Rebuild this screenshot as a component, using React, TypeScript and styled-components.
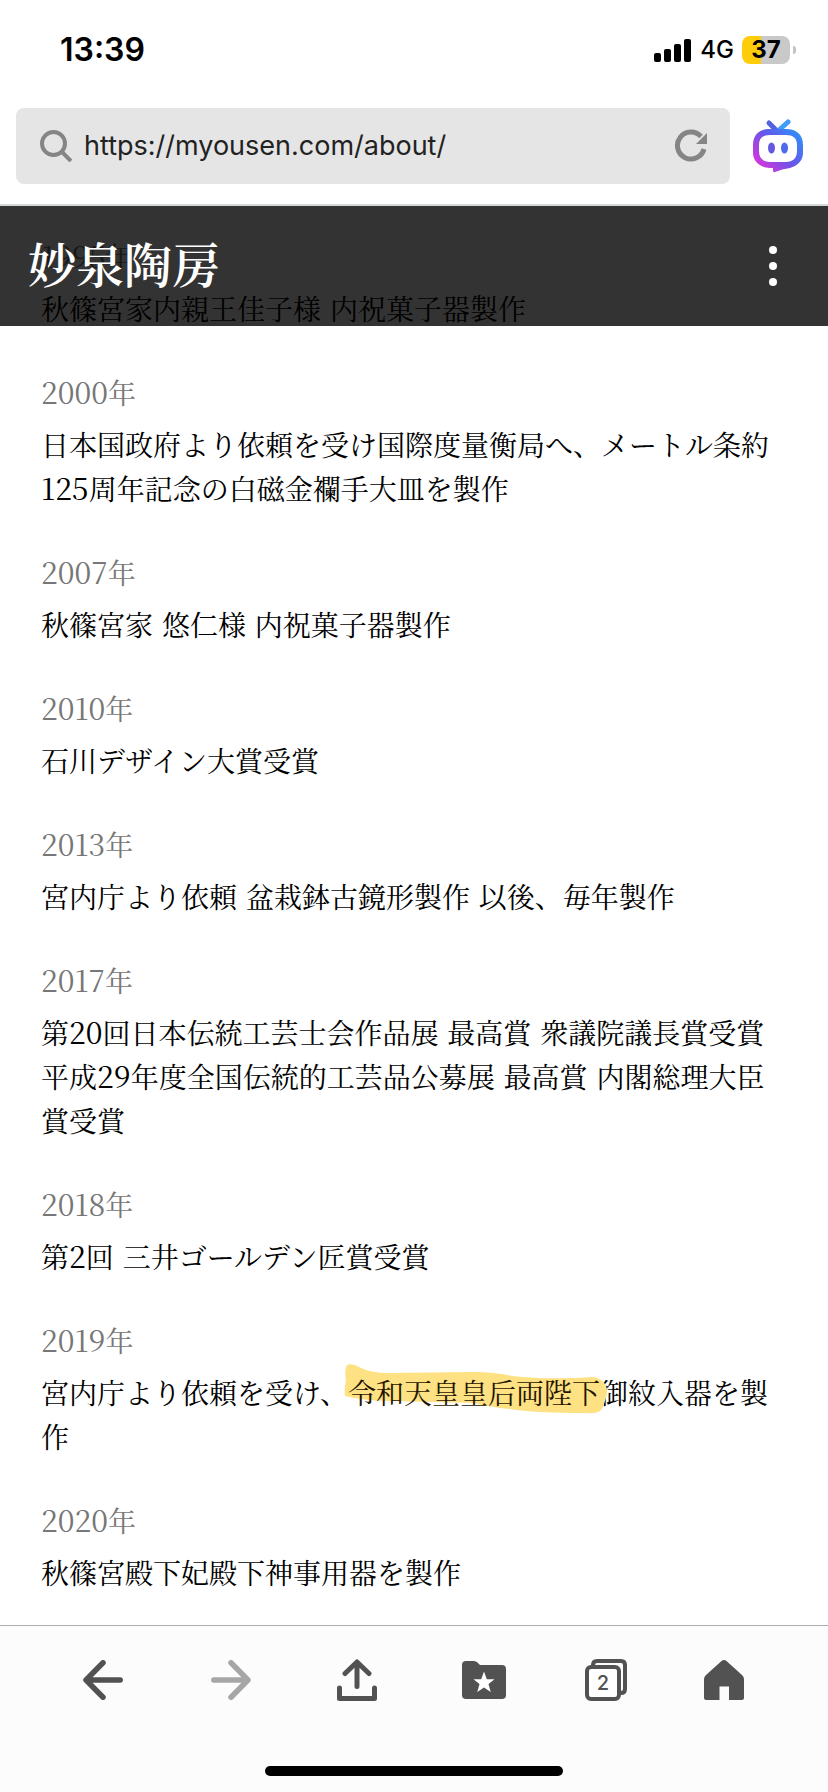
import React, { Fragment } from "react";
import styled, { createGlobalStyle } from "styled-components";

const GlobalStyle = createGlobalStyle`
  *, *::before, *::after { box-sizing: border-box; }
  body { margin: 0; background: #ffffff; }
  button { border: 0; padding: 0; background: none; cursor: pointer; font: inherit; color: inherit; }
`;

const ui = `Inter, "Liberation Sans", sans-serif`;
const mincho = `"DejaVu Serif", "Noto Serif CJK JP", "Noto Sans CJK JP", serif`;

const Screen = styled.div`
  display: flex;
  flex-direction: column;
  min-height: 100vh;
  background: #ffffff;
  color: #000000;
`;

const StatusBar = styled.div`
  display: flex;
  align-items: center;
  justify-content: space-between;
  height: 100px;
  padding: 0 32px 0 60px;
  font-family: ${ui};
`;

const Time = styled.span`
  font-size: 32px;
  line-height: 40px;
  font-weight: 600;
`;

const StatusIcons = styled.div`
  display: flex;
  align-items: center;
  gap: 8px;
`;

const Network = styled.span`
  font-size: 24px;
  line-height: 32px;
  font-weight: 500;
`;

const Battery = styled.div`
  display: flex;
  align-items: center;
  gap: 3px;

  &::after {
    content: "";
    width: 3px;
    height: 8px;
    border-radius: 0 4px 4px 0;
    background: #c4c4c4;
  }
`;

const BatteryLevel = styled.span`
  width: 48px;
  height: 28px;
  border-radius: 8px;
  background: linear-gradient(90deg, #ffcc0a 40%, #c9c9c9 40%);
  font-size: 24px;
  line-height: 28px;
  font-weight: 700;
  text-align: center;
`;

const AddressRow = styled.div`
  display: flex;
  align-items: center;
  gap: 22px;
  padding: 8px 24px 20px 16px;
  border-bottom: 2px solid #d5d9d6;
`;

const AddressBar = styled.form`
  display: flex;
  flex: 1;
  align-items: center;
  gap: 12px;
  min-width: 0;
  height: 76px;
  padding: 0 22px 0 24px;
  border-radius: 8px;
  background: #e5e5e5;
  color: #858585;
`;

const AddressInput = styled.input`
  flex: 1;
  min-width: 0;
  padding: 0;
  border: 0;
  outline: 0;
  background: transparent;
  color: #222222;
  font-family: ${ui};
  font-size: 27px;
  line-height: 40px;
`;

const IconButton = styled.button`
  display: grid;
  place-items: center;
  flex: none;
`;

const Site = styled.main`
  position: relative;
  flex: 1;
`;

const SiteHeader = styled.header`
  position: absolute;
  inset: 0 0 auto 0;
  z-index: 1;
  display: flex;
  align-items: center;
  justify-content: space-between;
  height: 120px;
  padding: 0 35px 0 28px;
  background: rgba(0, 0, 0, 0.8);
  color: #ffffff;
`;

const SiteLogo = styled.a`
  color: inherit;
  font-family: ${mincho};
  font-size: 48px;
  line-height: 64px;
  font-weight: 600;
  text-decoration: none;
`;

const MenuButton = styled(IconButton)`
  width: 40px;
  height: 48px;
`;

const History = styled.dl`
  display: flex;
  flex-direction: column;
  gap: 40px;
  margin: 0;
  padding: 31px 42px 28px 41px;
  font-family: ${mincho};
  font-size: 28px;
  line-height: 44px;
`;

const Entry = styled.div`
  display: flex;
  flex-direction: column;
  gap: 8px;
`;

const Year = styled.dt`
  color: #777777;
`;

const Detail = styled.dd`
  margin: 0;
`;

const Numeral = styled.span`
  font-family: "Noto Serif CJK JP", "Liberation Serif", serif;
  font-size: 30px;
  line-height: 30px;
`;

const Marked = styled.mark`
  position: relative;
  z-index: 0;
  background: none;
  color: #1f1500;
`;

const MarkerStroke = styled.svg`
  position: absolute;
  left: -4px;
  bottom: -4px;
  z-index: -1;
`;

const Toolbar = styled.nav`
  display: grid;
  grid-template-columns: 128fr 128fr 124fr 130fr 114fr 122fr;
  align-content: start;
  height: 141px;
  padding: 30px 43px 0 39px;
  border-top: 1px solid #adadad;
  background: #fcfcfc;
  color: #525252;
`;

const ToolButton = styled(IconButton)`
  height: 48px;

  &:disabled { color: #a6a6a6; }
`;

const HomeArea = styled.div`
  display: flex;
  justify-content: center;
  padding-bottom: 16px;
  background: #fcfcfc;
`;

const HomeIndicator = styled.div`
  width: 36%;
  height: 10px;
  border-radius: 5px;
  background: #000000;
`;

type HistoryItem = { year: string; lines: string[]; highlight?: string };

const history: HistoryItem[] = [
  { year: "1995年", lines: ["秋篠宮家内親王佳子様 内祝菓子器製作"] },
  { year: "2000年", lines: ["日本国政府より依頼を受け国際度量衡局へ、メートル条約125周年記念の白磁金襴手大皿を製作"] },
  { year: "2007年", lines: ["秋篠宮家 悠仁様 内祝菓子器製作"] },
  { year: "2010年", lines: ["石川デザイン大賞受賞"] },
  { year: "2013年", lines: ["宮内庁より依頼 盆栽鉢古鏡形製作 以後、毎年製作"] },
  {
    year: "2017年",
    lines: [
      "第20回日本伝統工芸士会作品展 最高賞 衆議院議長賞受賞",
      "平成29年度全国伝統的工芸品公募展 最高賞 内閣総理大臣賞受賞",
    ],
  },
  { year: "2018年", lines: ["第2回 三井ゴールデン匠賞受賞"] },
  {
    year: "2019年",
    lines: ["宮内庁より依頼を受け、令和天皇皇后両陛下御紋入器を製作"],
    highlight: "令和天皇皇后両陛下",
  },
  { year: "2020年", lines: ["秋篠宮殿下妃殿下神事用器を製作"] },
];

function Text({ value }: { value: string }) {
  return (
    <>
      {value.split(/(\d+)/).map((part, i) =>
        /^\d+$/.test(part) ? <Numeral key={i}>{part}</Numeral> : <Fragment key={i}>{part}</Fragment>
      )}
    </>
  );
}

function Line({ value, highlight }: { value: string; highlight?: string }) {
  if (!highlight) return <Text value={value} />;
  const [before, after] = value.split(highlight);
  return (
    <>
      <Text value={before} />
      <Marked>
        <MarkerStroke width="264" height="52" viewBox="0 0 264 52" aria-hidden="true">
          <path
            d="M3 2Q9 0 15 4Q26 10 45 10L130 9Q152 9 168 13Q205 17 250 14Q264 18 263 30Q261 41 257 47Q253 51 242 50Q190 50 166 46Q145 44 130 40L48 38Q20 38 1 33Q0 26 2 17Q0 7 3 2Z"
            fill="#fee183"
          />
        </MarkerStroke>
        {highlight}
      </Marked>
      <Text value={after} />
    </>
  );
}

const SignalIcon = () => (
  <svg width="38" height="24" viewBox="0 0 38 24" fill="currentColor" aria-hidden="true">
    <rect x="0" y="15" width="7" height="9" rx="2" />
    <rect x="10" y="11" width="7" height="13" rx="2" />
    <rect x="20" y="6" width="7" height="18" rx="2" />
    <rect x="30" y="1" width="7" height="23" rx="2" />
  </svg>
);

const SearchIcon = () => (
  <svg width="32" height="32" viewBox="0 0 32 32" fill="none" stroke="currentColor" aria-hidden="true">
    <circle cx="13.5" cy="13.5" r="11.5" strokeWidth="4" />
    <path d="M21.5 21.5L31 31" strokeWidth="4" />
  </svg>
);

const ReloadIcon = () => (
  <svg width="34" height="34" viewBox="0 0 34 34" aria-hidden="true">
    <path d="M30 20A13.500 13.500 0 1 1 27 7.500" fill="none" stroke="currentColor" strokeWidth="5" />
    <path d="M33 4V15H22Z" fill="currentColor" />
  </svg>
);

const BotIcon = () => (
  <svg width="52" height="54" viewBox="0 0 52 54" fill="none" aria-hidden="true">
    <defs>
      <linearGradient id="bot-body" x1="8" y1="46" x2="44" y2="12" gradientUnits="userSpaceOnUse">
        <stop offset="0" stopColor="#cf38dc" />
        <stop offset="0.5" stopColor="#6557ea" />
        <stop offset="1" stopColor="#338cf8" />
      </linearGradient>
    </defs>
    <path d="M17 4L25 12" stroke="#5462df" strokeWidth="5" strokeLinecap="round" />
    <path d="M36 3L26 12" stroke="#419bf7" strokeWidth="5" strokeLinecap="round" />
    <path
      fillRule="evenodd"
      d="M18 10H34C45 10 51 16 51 26V34C51 42 45 47 38 49Q30 50 23 53Q21 54 21 51V49H18C8 49 1 42 1 34V26C1 16 7 10 18 10ZM18 16C11 16 7 19 7 26V32C7 39 11 43 18 43H34C41 43 45 39 45 32V26C45 19 41 16 34 16Z"
      fill="url(#bot-body)"
    />
    <ellipse cx="19.5" cy="29" rx="3.5" ry="5.5" fill="#6459df" />
    <ellipse cx="32.5" cy="29" rx="3.5" ry="5.5" fill="#4d6ceb" />
  </svg>
);

const DotsIcon = () => (
  <svg width="8" height="40" viewBox="0 0 8 40" fill="currentColor" aria-hidden="true">
    <circle cx="4" cy="4" r="4" />
    <circle cx="4" cy="20" r="4" />
    <circle cx="4" cy="36" r="4" />
  </svg>
);

const ArrowIcon = ({ forward = false }: { forward?: boolean }) => (
  <svg width="40" height="40" viewBox="0 0 40 40" fill="none" stroke="currentColor" strokeWidth="5.5" strokeLinecap="round" strokeLinejoin="round" aria-hidden="true">
    <path d={forward ? "M20 2.8L37 20L20 37.2M36 20H2.8" : "M20 2.8L3 20L20 37.2M4 20H37.2"} />
  </svg>
);

const ShareIcon = () => (
  <svg width="40" height="42" viewBox="0 0 40 42" fill="none" stroke="currentColor" strokeWidth="5" strokeLinecap="round" strokeLinejoin="round" aria-hidden="true">
    <path d="M8 14.5L20 3L32 14.5M20 4V27.5" />
    <path d="M2.5 29V39.5H37.5V29" />
  </svg>
);

const FolderIcon = () => (
  <svg width="44" height="38" viewBox="0 0 44 38" aria-hidden="true">
    <path d="M4 0H12Q14 0 15.5 1.5L18 4H40Q44 4 44 8V34Q44 38 40 38H4Q0 38 0 34V4Q0 0 4 0Z" fill="currentColor" />
    <path d="M22 10.5L24.8 18.2H32.5L26.5 23L28.7 31L22 26.4L15.3 31L17.5 23L11.5 18.2H19.2Z" fill="#ffffff" />
  </svg>
);

const TabsFrame = styled.span`
  position: relative;
  display: grid;
  width: 42px;
  height: 42px;

  svg { position: absolute; inset: 0; }
`;

const TabCount = styled.span`
  position: absolute;
  left: 0;
  bottom: 0;
  width: 36px;
  font-family: ${ui};
  font-size: 20px;
  line-height: 36px;
  font-weight: 500;
  text-align: center;
`;

const HomeIcon = () => (
  <svg width="40" height="40" viewBox="0 0 40 40" fill="currentColor" aria-hidden="true">
    <path d="M17.5 1Q20 -1 22.5 1L38.5 15.5Q40 17 40 19V38Q40 40 38 40H25V26.5H15.5V40H2Q0 40 0 38V19Q0 17 1.5 15.5Z" />
  </svg>
);

export default function App() {
  return (
    <Screen>
      <GlobalStyle />
      <StatusBar>
        <Time>13:39</Time>
        <StatusIcons>
          <SignalIcon />
          <Network>4G</Network>
          <Battery>
            <BatteryLevel>37</BatteryLevel>
          </Battery>
        </StatusIcons>
      </StatusBar>
      <AddressRow>
        <AddressBar onSubmit={(e) => e.preventDefault()}>
          <SearchIcon />
          <AddressInput aria-label="URL" type="text" defaultValue="https://myousen.com/about/" />
          <IconButton type="button" aria-label="再読み込み">
            <ReloadIcon />
          </IconButton>
        </AddressBar>
        <IconButton type="button" aria-label="アシスタント">
          <BotIcon />
        </IconButton>
      </AddressRow>
      <Site>
        <SiteHeader>
          <SiteLogo href="/">妙泉陶房</SiteLogo>
          <MenuButton type="button" aria-label="メニュー">
            <DotsIcon />
          </MenuButton>
        </SiteHeader>
        <History>
          {history.map((item) => (
            <Entry key={item.year}>
              <Year>
                <Text value={item.year} />
              </Year>
              <Detail>
                {item.lines.map((line, i) => (
                  <Fragment key={i}>
                    {i > 0 && <br />}
                    <Line value={line} highlight={item.highlight} />
                  </Fragment>
                ))}
              </Detail>
            </Entry>
          ))}
        </History>
      </Site>
      <Toolbar>
        <ToolButton type="button" aria-label="戻る">
          <ArrowIcon />
        </ToolButton>
        <ToolButton type="button" aria-label="進む" disabled>
          <ArrowIcon forward />
        </ToolButton>
        <ToolButton type="button" aria-label="共有">
          <ShareIcon />
        </ToolButton>
        <ToolButton type="button" aria-label="ブックマーク">
          <FolderIcon />
        </ToolButton>
        <ToolButton type="button" aria-label="タブ">
          <TabsFrame>
            <svg width="42" height="42" viewBox="0 0 42 42" fill="none" stroke="currentColor" strokeWidth="4" aria-hidden="true">
              <path d="M8 8V6Q8 2 12 2H36Q40 2 40 6V30Q40 34 36 34H34" />
              <rect x="2" y="8" width="32" height="32" rx="4" fill="#ffffff" />
            </svg>
            <TabCount>2</TabCount>
          </TabsFrame>
        </ToolButton>
        <ToolButton type="button" aria-label="ホーム">
          <HomeIcon />
        </ToolButton>
      </Toolbar>
      <HomeArea>
        <HomeIndicator />
      </HomeArea>
    </Screen>
  );
}
